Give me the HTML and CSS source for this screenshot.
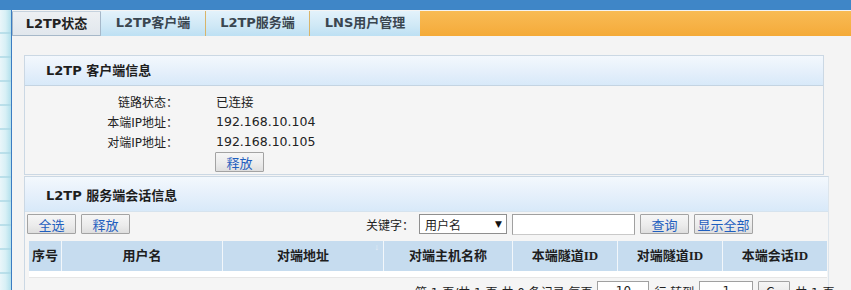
FILE: index.html
```html
<!DOCTYPE html>
<html lang="zh-CN">
<head>
<meta charset="utf-8">
<title>L2TP状态</title>
<link rel="stylesheet" href="styles.css">
</head>
<body>
<div class="topbar"></div>
<div class="layout">
  <div class="side"></div>
  <div class="main">
    <div class="tabs">
      <div class="tab active">L2TP状态</div>
      <div class="tab t2">L2TP客户端</div>
      <div class="tab t3">L2TP服务端</div>
      <div class="tab t4">LNS用户管理</div>
      <div class="tab-fill"></div>
    </div>

    <div class="panel p1">
      <div class="panel-head">L2TP 客户端信息</div>
      <div class="panel-body">
        <div class="row"><span class="lbl">链路状态：</span><span class="val">已连接</span></div>
        <div class="row"><span class="lbl">本端IP地址：</span><span class="val num">192.168.10.104</span></div>
        <div class="row"><span class="lbl">对端IP地址：</span><span class="val num">192.168.10.105</span></div>
        <div class="row btnrow"><span class="lbl"></span><button class="btn w49">释放</button></div>
      </div>
    </div>

    <div class="panel p2">
      <div class="panel-head tall">L2TP 服务端会话信息</div>
      <div class="toolbar">
        <button class="btn w49">全选</button>
        <button class="btn w49">释放</button>
        <div class="spacer"></div>
        <span class="kw">关键字：</span>
        <div class="select"><span>用户名</span><span class="arrow">▼</span></div>
        <div class="input"></div>
        <button class="btn w49">查询</button>
        <button class="btn w59">显示全部</button>
      </div>
      <div class="thead">
        <div class="th">序号</div>
        <div class="th">用户名</div>
        <div class="th">对端地址<span class="sort">↓</span></div>
        <div class="th">对端主机名称</div>
        <div class="th">本端隧道ID</div>
        <div class="th">对端隧道ID</div>
        <div class="th">本端会话ID</div>
      </div>
      <div class="tbody"></div>
      <div class="pager">
        <span>第 1 页/共 1 页 共 0 条记录 每页</span>
        <div class="pinput">10</div>
        <span>行 转到</span>
        <div class="pinput w54">1</div>
        <button class="btn go">Go</button>
        <span>共 1 页</span>
      </div>
    </div>
  </div>
</div>
</body>
</html>
```

FILE: styles.css
```css
* { box-sizing: border-box; }
html, body {
  margin: 0;
  padding: 0;
  width: 851px;
  height: 290px;
  overflow: hidden;
  background: #f4f4f4;
  font-family: "DejaVu Sans", "Noto Sans CJK SC", sans-serif;
  font-size: 12px;
  color: #222;
}
.topbar {
  height: 10px;
  background: #3f86c7;
}
.layout {
  display: flex;
  height: 280px;
}
.side {
  width: 11px;
  background: linear-gradient(90deg, #eaf6fa 0, #d8f0f6 50%, #b2e0ec 100%);
}
.side::after {
  content: "";
  display: block;
  height: 100%;
  background: repeating-linear-gradient(180deg, rgba(255,255,255,0) 0 22px, rgba(170,215,228,0.7) 22px 24px);
}
.main {
  flex: 1;
  border-left: 1px solid #3b7cc2;
  background: #f4f4f4;
}
.tabs {
  display: flex;
  height: 26px;
  padding-top: 1px;
}
.tab {
  height: 25px;
  line-height: 24px;
  text-align: center;
  font-weight: bold;
  font-size: 13px;
  color: #3a4650;
  background: linear-gradient(180deg, #e3f2fb 0%, #cfe8f6 60%, #bde0f3 100%);
  border-right: 1px solid #d8b46a;
}
.tab.active {
  width: 89px;
  color: #222;
  background: linear-gradient(180deg, #edf0f3 0%, #e1e7ed 100%);
  border: 1px solid #a6b8c9;
  border-top-color: #c5d2de;
  border-radius: 1px;
}
.tab.t2 { width: 105px; }
.tab.t3 { width: 104px; }
.tab.t4 { width: 110px; border-right: none; }
.tab-fill {
  flex: 1;
  height: 25px;
  background: linear-gradient(180deg, #f8bb54 0%, #f6b145 60%, #f4aa38 100%);
}

.panel {
  margin-left: 12px;
  border: 1px solid #cbd8e4;
  background: #f5f5f5;
}
.p1 {
  margin-top: 19px;
  width: 800px;
}
.p2 {
  margin-top: 1px;
  width: 805px;
  border-right-color: #dde5ec;
}
.panel-head {
  height: 30px;
  line-height: 30px;
  padding-left: 21px;
  font-weight: bold;
  font-size: 13px;
  color: #1e1e1e;
  background: linear-gradient(180deg, #f3f8fd 0%, #e6f0fb 50%, #d8e9f9 100%);
  border-bottom: 1px solid #c4d4e2;
}
.panel-head.tall {
  height: 35px;
  line-height: 37px;
  border-bottom-color: #d6e3ee;
}
.panel-body {
  padding-top: 5px;
  padding-bottom: 2px;
}
.row {
  display: flex;
  height: 20px;
  align-items: center;
}
.lbl {
  width: 153px;
  text-align: right;
  color: #222;
}
.val {
  margin-left: 38px;
  font-size: 12.5px;
}
.btnrow {
  height: 21px;
  align-items: flex-start;
  padding-top: 1px;
}
.btnrow .btn { margin-left: 37px; }

.btn {
  height: 20px;
  padding: 0;
  font-family: "Noto Sans CJK SC", sans-serif;
  font-size: 13px;
  line-height: 17px;
  color: #1f5fbf;
  background: linear-gradient(180deg, #f6f6f6 0%, #ebebeb 60%, #dedede 100%);
  border: 1px solid #a3a3a3;
  border-radius: 1px;
}
.w49 { width: 49px; }
.w59 { width: 59px; }

.toolbar {
  display: flex;
  align-items: center;
  gap: 5px;
  padding: 2px 0 0 2px;
  height: 22px;
}
.spacer { flex: 1; }
.kw {
  width: 48px;
  font-size: 12px;
  color: #222;
}
.select {
  width: 88px;
  height: 20px;
  border: 1px solid #8f8f8f;
  background: #fff;
  display: flex;
  align-items: center;
  justify-content: space-between;
  padding: 0 4px 0 5px;
  font-size: 12px;
}
.select .arrow { font-size: 9px; color: #111; }
.input {
  width: 123px;
  height: 21px;
  border: 1px solid #a0a0a0;
  border-bottom-color: #c9c9c9;
  background: #fff;
}
.toolbar .btn:last-child { margin-right: 75px; }

.thead {
  margin: 7px 0 0 4px;
  display: grid;
  grid-template-columns: 32px 160px 160px 128px 104px 104px 104px;
  gap: 1px;
  background: #f2f7fb;
  width: 798px;
}
.th {
  height: 30px;
  line-height: 30px;
  text-align: center;
  background: #c6dcef;
  font-family: "Liberation Serif", "Noto Sans CJK SC", serif;
  font-weight: bold;
  font-size: 13px;
  color: #1e1e1e;
  position: relative;
}
.sort {
  position: absolute;
  right: 4px;
  top: -9px;
  font-size: 9px;
  color: #e6eef6;
  font-weight: normal;
}
.tbody {
  margin-left: 4px;
  width: 798px;
  height: 7px;
  background: #fff;
  border-bottom: 1px solid #e6e6e6;
}
.pager {
  display: flex;
  align-items: center;
  gap: 5px;
  padding-top: 3px;
  padding-left: 390px;
  white-space: nowrap;
  font-size: 12px;
  color: #222;
}
.pinput {
  flex: none;
  width: 52px;
  height: 20px;
  border: 1px solid #a0a0a0;
  background: #fff;
  text-align: center;
  line-height: 18px;
}
.pinput.w54 { width: 54px; }
.go { flex: none; width: 32px; color: #222; }
```
